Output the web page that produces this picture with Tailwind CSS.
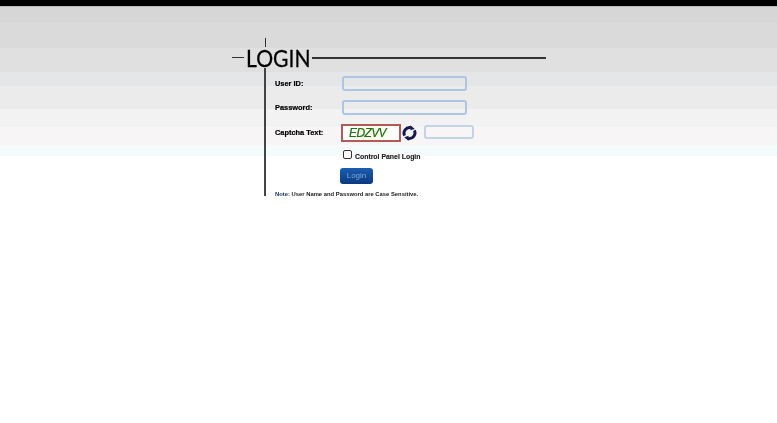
<!DOCTYPE html>
<html lang="en">
<head>
    <meta charset="UTF-8">
    <title>Login</title>
    <script src="https://cdn.jsdelivr.net/npm/@tailwindcss/browser@4"></script>
</head>
<body class="h-[423px] overflow-hidden font-['Liberation_Sans',sans-serif] bg-[linear-gradient(#000_0,#000_6px,#bbb_6px,#bbb_7px,#d6d6d6_7px,#d6d6d6_22px,#dadada_22px,#dadada_48px,#e0e0e0_48px,#e0e0e0_72px,#e5e6e8_72px,#e5e6e8_86px,#ebebeb_86px,#ebebeb_109px,#f2f2f2_109px,#f2f2f2_127px,#f7f5f6_127px,#f7f5f6_145px,#f5fbfb_145px,#f5fbfb_156px,#fff_156px)]">
    <div class="w-[314px] ml-[232px] pt-[38px] blur-[0.5px]">
        <!-- top tick -->
        <div class="w-[1px] h-[9px] ml-[33px] bg-[#333]"></div>

        <!-- title -->
        <div class="flex items-center h-[21px]">
            <div class="w-[12px] h-[1px] bg-[#333]"></div>
            <div class="ml-[2px] w-[64px]">
                <h1 class="text-[24px] leading-[21px] font-['Lato',sans-serif] text-black whitespace-nowrap origin-left scale-x-[0.88] [-webkit-text-stroke:0.3px_black]">LOGIN</h1>
            </div>
            <div class="flex-1 ml-[2px] h-[2px] bg-[#333]"></div>
        </div>

        <!-- form -->
        <form class="ml-[32px] h-[128px] border-l-[2px] border-[#444] pl-[9px] pt-[8px]">
            <div class="flex items-center h-[15px]">
                <label class="w-[67px] text-[7.4px] font-bold text-black [-webkit-text-stroke:0.2px_black]">User ID:</label>
                <input type="text" class="w-[125px] h-[15px] rounded-[3px] border-2 border-[#aec5e4] bg-transparent">
            </div>
            <div class="flex items-center h-[15px] mt-[9px]">
                <label class="w-[67px] text-[7.4px] font-bold text-black [-webkit-text-stroke:0.2px_black]">Password:</label>
                <input type="password" class="w-[125px] h-[15px] rounded-[3px] border-2 border-[#aec5e4] bg-transparent">
            </div>
            <div class="flex items-center h-[18px] mt-[9px]">
                <label class="w-[66px] text-[7.4px] font-bold text-black [-webkit-text-stroke:0.2px_black]">Captcha Text:</label>
                <div class="w-[60px] h-[18px] border-2 border-[#b05a5a] bg-[linear-gradient(90deg,#fff,#fbfde8_50%,#fff)] pl-[6px] text-[12px] leading-[14px] italic text-[#1f6e14] tracking-[-0.6px] [-webkit-text-stroke:0.2px_#1f6e14]">EDZVV</div>
                <svg class="ml-[1px] w-[15px] h-[16px]" viewBox="0 0 16 16" fill="none">
                    <path d="M2.8 10.8 A6 6 0 0 1 9.5 2.3" stroke="#14184f" stroke-width="3.2"/>
                    <path d="M9 -0.4 L13.6 3.6 L9 5 Z" fill="#14184f"/>
                    <path d="M13.2 5.2 A6 6 0 0 1 6.5 13.7" stroke="#14184f" stroke-width="3.2"/>
                    <path d="M7 16.4 L2.4 12.4 L7 11 Z" fill="#14184f"/>
                </svg>
                <input type="text" class="ml-[7px] w-[50px] h-[14px] rounded-[3px] border-2 border-[#c4d3e6] bg-transparent -mt-[3px]">
            </div>
            <div class="flex items-center h-[12px] mt-[8px] ml-[68px]">
                <span class="w-[9px] h-[9px] rounded-[2px] border border-[#333] bg-white -mt-[4px]"></span>
                <span class="ml-[3px] mt-[2px] text-[6.9px] font-bold text-[#222] [-webkit-text-stroke:0.15px_#222]">Control Panel Login</span>
            </div>
            <button type="button" class="block mt-[6px] ml-[65px] w-[33px] h-[16px] rounded-[3px] bg-[linear-gradient(#1a5eb0,#0a3a80)] text-[8px] text-[#7ea6d8]">Login</button>
            <p class="mt-[6px] text-[5.85px] leading-[8px] font-bold text-[#222]"><span class="text-[#12305f]">Note:</span> User Name and Password are Case Sensitive.</p>
        </form>
    </div>
</body>
</html>
